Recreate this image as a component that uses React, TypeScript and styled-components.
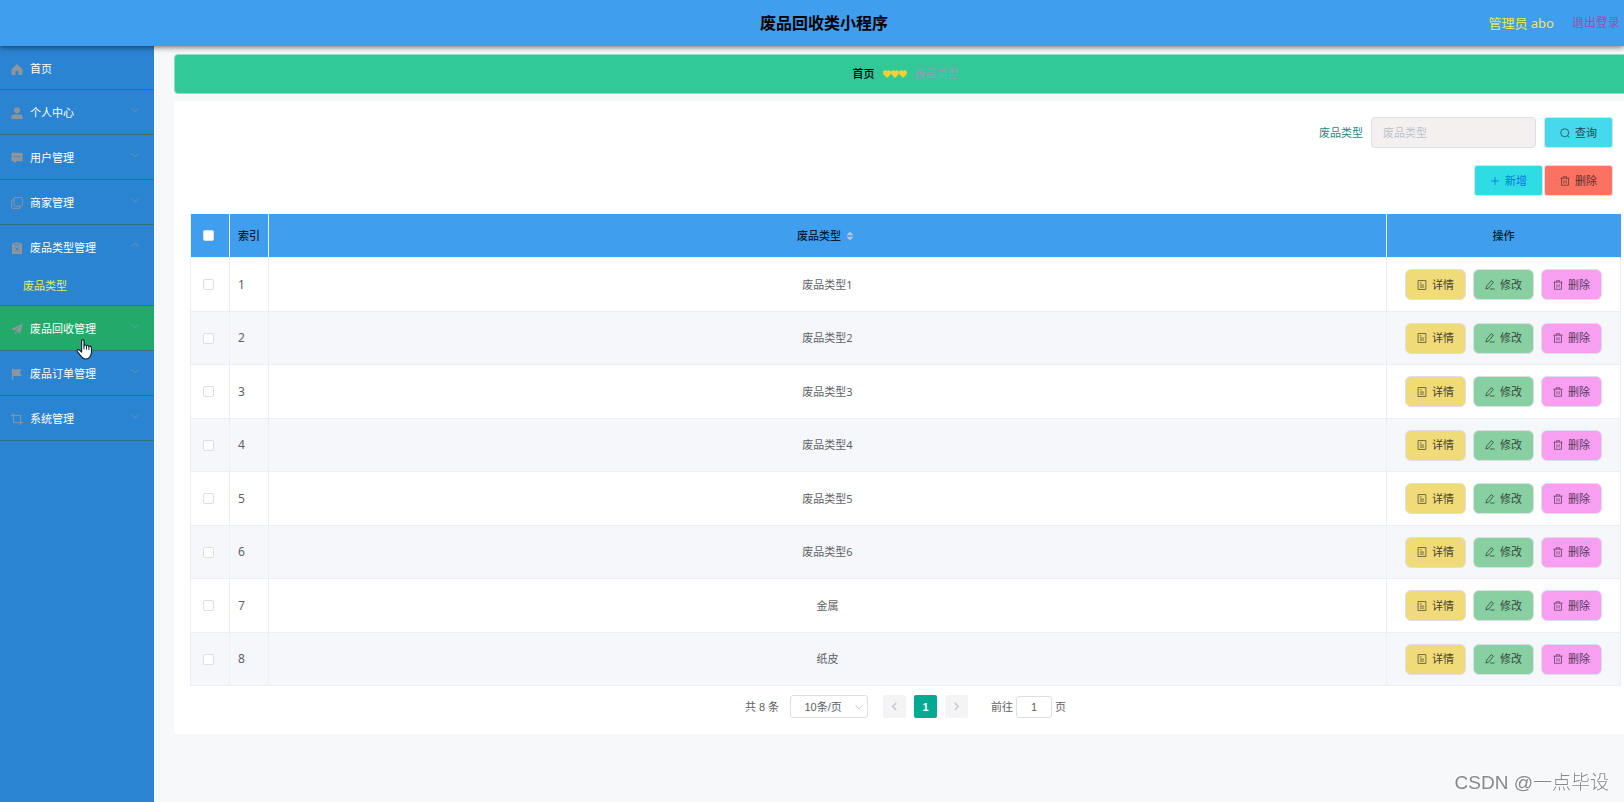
import React from 'react';
import styled, { createGlobalStyle, css } from 'styled-components';

const GlobalStyle = createGlobalStyle`
  *, *::before, *::after { box-sizing: border-box; }
  body {
    margin: 0;
    background: #f6f8fa;
    color: #606266;
    font-family: "Noto Sans", "Noto Sans CJK SC", sans-serif;
    font-size: 11px;
    line-height: 16px;
  }
  button, input, select { font: inherit; color: inherit; margin: 0; }
  button { cursor: pointer; }
  a { color: inherit; text-decoration: none; }
`;

const Page = styled.div`
  display: flex;
  flex-direction: column;
  min-height: 100vh;
  overflow: hidden;
`;

const Header = styled.header`
  position: relative;
  z-index: 2;
  display: grid;
  align-items: center;
  height: 46px;
  padding: 0 4px 0 28px;
  background: #409eef;
  box-shadow: 0 1px 6px rgba(0, 0, 0, 0.6);
`;

const Title = styled.h1`
  grid-area: 1 / 1;
  justify-self: center;
  margin: 0;
  color: #000;
  font-size: 16px;
  line-height: 24px;
  font-weight: 700;
`;

const UserZone = styled.div`
  grid-area: 1 / 1;
  justify-self: end;
  display: flex;
  gap: 18px;
  font-size: 13px;
  line-height: 20px;
`;

const UserName = styled.span`
  color: #e6ec4a;
`;

const Logout = styled.a`
  color: #a04cb4;
  font-size: 12px;
`;

const Body = styled.div`
  display: flex;
  flex: 1;
`;

const Sidebar = styled.nav`
  flex: 0 0 154px;
  background: #2a84d2;
`;

const Menu = styled.ul`
  list-style: none;
  margin: 0;
  padding: 0;
`;

const MenuItem = styled.li<{ $hovered?: boolean }>`
  position: relative;
  border-bottom: 1px solid #356f7c;
  ${(p) => p.$hovered && css`background: #23aa6b;`}
`;

const MenuLink = styled.a<{ $first?: boolean }>`
  display: flex;
  align-items: center;
  gap: 7px;
  height: ${(p) => (p.$first ? 43 : 44)}px;
  padding: 2px 15px 0 11px;
  color: #fff;
`;

const MenuIcon = styled.svg`
  flex: none;
  width: 12px;
  height: 12px;
  color: #8f959c;
`;

const Chevron = styled.svg`
  width: 8px;
  height: 8px;
  margin: 0 0 6px auto;
  color: #6f93b5;
`;

const SubLink = styled.a`
  display: block;
  height: 36px;
  padding: 9px 23px;
  color: #e6ec5a;
`;

const Pointer = styled.svg`
  position: absolute;
  z-index: 3;
  left: 76px;
  top: 33px;
  width: 18px;
  height: 21px;
  pointer-events: none;
`;

const Main = styled.main`
  flex: 1;
  min-width: 0;
  margin: 8px -13px 0 20px;
`;

const Breadcrumb = styled.nav`
  display: flex;
  align-items: center;
  justify-content: center;
  gap: 8px;
  height: 40px;
  border: 1px solid #8fe0c2;
  border-radius: 4px;
  background: #31c998;
`;

const Crumb = styled.a`
  color: #000;
  font-weight: 500;
`;

const CurrentCrumb = styled.span`
  color: #84a4bc;
`;

const Hearts = styled.svg`
  width: 24px;
  height: 8px;
  color: #f8cf30;
`;

const Card = styled.section`
  margin-top: 7px;
  padding: 16px;
  background: #fff;
`;

const SearchForm = styled.form`
  display: flex;
  align-items: center;
  justify-content: flex-end;
  gap: 8px;
  padding-right: 8px;
  label { color: #2b8585; }
`;

const SearchInput = styled.input`
  width: 165px;
  height: 31px;
  padding: 0 11px;
  border: 1px solid #dcdfe6;
  border-radius: 4px;
  background: #f5f0f0;
  outline: none;
  &::placeholder { color: #bcc2cc; opacity: 1; }
`;

const Actions = styled.div`
  display: flex;
  justify-content: flex-end;
  gap: 1px;
  padding: 17px 8px 18px 0;
`;

const tones = {
  search: { bg: '#46d9ee', fg: '#26474c' },
  add: { bg: '#2edce3', fg: '#1470e6' },
  remove: { bg: '#fb7261', fg: '#5a3333' },
  detail: { bg: '#f1db79', fg: '#46432f' },
  edit: { bg: '#88d0a2', fg: '#33493a' },
  erase: { bg: '#f89ff2', fg: '#55395a' },
};

const ActionButton = styled.button<{ $tone: keyof typeof tones; $small?: boolean }>`
  display: inline-flex;
  align-items: center;
  justify-content: center;
  gap: 5px;
  width: ${(p) => (p.$small ? 61 : 69)}px;
  height: 31px;
  padding: 0;
  border: 1px solid #dcdfe6;
  border-radius: ${(p) => (p.$small ? 6 : 3)}px;
  background: ${(p) => tones[p.$tone].bg};
  color: ${(p) => tones[p.$tone].fg};
  svg { width: 10px; height: 10px; }
`;

const Table = styled.table`
  width: 100%;
  table-layout: fixed;
  border-collapse: separate;
  border-spacing: 0;
  border-left: 1px solid #ebeef5;

  th, td {
    padding: 0 8px;
    border-right: 1px solid #ebeef5;
    border-bottom: 1px solid #ebeef5;
    text-align: center;
    vertical-align: middle;
  }
  th {
    height: 44px;
    background: #409eef;
    color: #0c1d30;
    font-weight: 500;
  }
  th:last-child { border-right-color: #409eef; }
  td { height: 54px; }
  tbody tr:nth-child(even) td { height: 53px; background: #f5f7fa; }
  tr > :nth-child(2) { text-align: left; }
`;

const IndexCell = styled.td`
  font-size: 12px;
`;

const Check = styled.input`
  appearance: none;
  display: block;
  width: 11px;
  height: 11px;
  margin: 0 0 0 4px;
  border: 1px solid #dcdfe6;
  border-radius: 2px;
  background: #fff;
`;

const SortLabel = styled.span`
  display: inline-flex;
  align-items: center;
  gap: 5px;
  margin-right: 4px;
  svg { width: 8px; height: 10px; color: #b9c6d6; }
`;

const RowActions = styled.div`
  display: flex;
  justify-content: center;
  gap: 7px;
`;

const Pagination = styled.div`
  display: flex;
  align-items: center;
  justify-content: center;
  padding-top: 9px;
  gap: 8px;
  font-family: "Liberation Sans", "Noto Sans CJK SC", sans-serif;
`;

const SizePicker = styled.div`
  position: relative;
  margin: 0 7px 0 3px;
  svg {
    position: absolute;
    right: 5px;
    top: 8px;
    width: 8px;
    height: 8px;
    color: #c0c4cc;
    pointer-events: none;
  }
`;

const SizeSelect = styled.select`
  appearance: none;
  display: block;
  width: 78px;
  height: 23px;
  padding: 0 20px 0 8px;
  border: 1px solid #dcdfe6;
  border-radius: 3px;
  background: #fff;
  text-align: center;
  text-align-last: center;
`;

const PageButton = styled.button<{ $active?: boolean }>`
  display: flex;
  align-items: center;
  justify-content: center;
  width: 23px;
  height: 23px;
  padding: 0;
  border: 0;
  border-radius: 2px;
  background: ${(p) => (p.$active ? '#00ab92' : '#f4f4f5')};
  color: ${(p) => (p.$active ? '#fff' : '#c0c4cc')};
  font-weight: 700;
  svg { width: 9px; height: 9px; }
`;

const Jumper = styled.label`
  display: flex;
  align-items: center;
  gap: 3px;
  margin-left: 15px;
`;

const JumpInput = styled.input`
  width: 36px;
  height: 22px;
  padding: 0;
  border: 1px solid #dcdfe6;
  border-radius: 3px;
  background: #fff;
  text-align: center;
`;

const Watermark = styled.div`
  position: fixed;
  right: 15px;
  bottom: 5px;
  color: #85888c;
  font-family: "Liberation Sans", "Noto Sans CJK SC", sans-serif;
  font-size: 19px;
  line-height: 28px;
  font-weight: 300;
  text-shadow: -1px -1px 0 #fff;
`;

const line = { fill: 'none', stroke: 'currentColor', strokeWidth: 1 } as const;

const menuGlyphs: Record<string, React.ReactNode> = {
  home: <path d="M6 1 0.6 6v6h4V8h2.8v4h4V6z" fill="currentColor" />,
  user: (
    <g fill="currentColor">
      <circle cx="6" cy="3.2" r="3" />
      <path d="M0.5 12V9.6A2.4 2.4 0 0 1 2.9 7.4h6.2a2.4 2.4 0 0 1 2.4 2.2V12z" />
    </g>
  ),
  comment: (
    <>
      <path d="M0.5 0.8h11v8.4H5.2L3.6 11.4 2.6 9.2H0.5z" fill="currentColor" />
      <path d="M3 4.6h1.2M5.4 4.6h1.2M7.8 4.6H9" stroke="#2a84d2" strokeWidth="1.2" />
    </>
  ),
  copy: (
    <g {...line}>
      <rect x="3" y="0.6" width="8.4" height="8.6" rx="1" />
      <path d="M3 3H1.6a1 1 0 0 0-1 1v6.4a1 1 0 0 0 1 1H8a1 1 0 0 0 1-1V9.2" />
    </g>
  ),
  release: (
    <>
      <path d="M1 1.4h2.4V0.4h5.2v1H11V12H1z" fill="currentColor" />
      <path d="M3.8 2.9h4.4M4.2 5.2l3.6 4M7.8 5.2l-3.6 4" stroke="#2a84d2" strokeWidth="0.9" fill="none" />
    </>
  ),
  send: (
    <g fill="currentColor">
      <path d="M11.8 0.4 0.2 6l3 1.4L9 3.2 4.4 8l4.8 2.6z" />
      <path d="M4.2 8.8v3L6 10z" />
    </g>
  ),
  flag: <path d="M0.8 0.4h1.4v0.8H11L8.6 4.6 11 8H2.2v4H0.8z" fill="currentColor" />,
  crop: <path d="M2.4 0v9.6H12M0 2.4h9.6V12" {...line} />,
};

const ChevronIcon = ({ up }: { up?: boolean }) => (
  <Chevron viewBox="0 0 8 8" aria-hidden="true">
    <path d={up ? 'M0.6 5.6 4 2.2l3.4 3.4' : 'M0.6 2.4 4 5.8l3.4-3.4'} {...line} />
  </Chevron>
);

const SearchIcon = () => (
  <svg viewBox="0 0 11 11" aria-hidden="true">
    <circle cx="5.2" cy="5.2" r="4.4" {...line} strokeWidth={0.9} />
    <path d="M8.4 8.6 10.2 10.4" {...line} strokeWidth={0.9} />
  </svg>
);

const PlusIcon = () => (
  <svg viewBox="0 0 11 11" aria-hidden="true">
    <path d="M5.5 1v9M1 5.5h9" {...line} strokeWidth={0.9} />
  </svg>
);

const TrashIcon = () => (
  <svg viewBox="0 0 11 11" aria-hidden="true">
    <path d="M0.5 2.4h10M3.6 2.4V0.8h3.8v1.6M1.7 2.4v7.8h7.6V2.4M4.3 4.6v3.6M6.7 4.6v3.6" {...line} strokeWidth={0.8} />
  </svg>
);

const TicketIcon = () => (
  <svg viewBox="0 0 11 11" aria-hidden="true">
    <path d="M1.2 0.6h8.6v9.8H1.2zM3.2 3.2h1.8M3.2 5.6h4.6M3.2 7.8h4.6" {...line} strokeWidth={0.8} />
  </svg>
);

const EditIcon = () => (
  <svg viewBox="0 0 11 11" aria-hidden="true">
    <path d="M6.8 0.8 9.2 2.4 4.4 8.6 1 10 1.8 6.8zM5.4 9.9h5.2" {...line} strokeWidth={0.9} />
  </svg>
);

const menu = [
  { label: '首页', icon: 'home', leaf: true },
  { label: '个人中心', icon: 'user' },
  { label: '用户管理', icon: 'comment' },
  { label: '商家管理', icon: 'copy' },
  { label: '废品类型管理', icon: 'release', children: ['废品类型'] },
  { label: '废品回收管理', icon: 'send', hovered: true },
  { label: '废品订单管理', icon: 'flag' },
  { label: '系统管理', icon: 'crop' },
];

const rows = ['废品类型1', '废品类型2', '废品类型3', '废品类型4', '废品类型5', '废品类型6', '金属', '纸皮'];

export default function App() {
  return (
    <Page>
      <GlobalStyle />
      <Header>
        <Title>废品回收类小程序</Title>
        <UserZone>
          <UserName>管理员 abo</UserName>
          <Logout href="#logout">退出登录</Logout>
        </UserZone>
      </Header>
      <Body>
        <Sidebar>
          <Menu>
            {menu.map((item) => (
              <MenuItem key={item.label} $hovered={item.hovered}>
                <MenuLink href="#" $first={item.leaf}>
                  <MenuIcon viewBox="0 0 12 12" aria-hidden="true">{menuGlyphs[item.icon]}</MenuIcon>
                  {item.label}
                  {!item.leaf && <ChevronIcon up={!!item.children} />}
                </MenuLink>
                {item.children?.map((child) => (
                  <SubLink key={child} href="#">{child}</SubLink>
                ))}
                {item.hovered && (
                  <Pointer viewBox="0 0 18 21" aria-hidden="true">
                    <path
                      d="M5.6 1.8c0-1.6 2.4-1.6 2.4 0v5c.3-1.2 2.4-1 2.5.3.5-1 2.3-.8 2.4.6.7-.9 2.6-.5 2.6 1.2v4.6c0 2-1.2 3.2-1.6 4.2-.8 1.6-2 2.3-4.2 2.3-2.6 0-3.6-1-4.6-2.6L1.4 12.6c-.9-1.6.8-2.7 2-1.6l2.2 2z"
                      fill="#fff"
                      stroke="#10253a"
                      strokeWidth="1.2"
                      strokeLinejoin="round"
                    />
                    <path d="M8 6.8v3.6M10.5 7.2v3.4M12.9 8v3" stroke="#10253a" strokeWidth="1" />
                  </Pointer>
                )}
              </MenuItem>
            ))}
          </Menu>
        </Sidebar>
        <Main>
          <Breadcrumb aria-label="面包屑">
            <Crumb href="#">首页</Crumb>
            <Hearts viewBox="0 0 24 8" aria-hidden="true">
              {[0, 8, 16].map((x) => (
                <path
                  key={x}
                  transform={`translate(${x} 0)`}
                  d="M4 8 0.6 4.6C-.8 2.6.4.3 2.1.3 3.1.3 3.7.8 4 1.5 4.3.8 4.900.3 5.900.3c1.700 0 2.900 2.300 1.500 4.300z"
                  fill="currentColor"
                />
              ))}
            </Hearts>
            <CurrentCrumb>废品类型</CurrentCrumb>
          </Breadcrumb>
          <Card>
            <SearchForm>
              <label htmlFor="type-filter">废品类型</label>
              <SearchInput id="type-filter" type="text" placeholder="废品类型" />
              <ActionButton type="button" $tone="search"><SearchIcon />查询</ActionButton>
            </SearchForm>
            <Actions>
              <ActionButton type="button" $tone="add"><PlusIcon />新增</ActionButton>
              <ActionButton type="button" $tone="remove"><TrashIcon />删除</ActionButton>
            </Actions>
            <Table>
              <colgroup>
                <col width="39" />
                <col width="39" />
                <col />
                <col width="234" />
              </colgroup>
              <thead>
                <tr>
                  <th><Check type="checkbox" aria-label="全选" /></th>
                  <th>索引</th>
                  <th>
                    <SortLabel>
                      废品类型
                      <svg viewBox="0 0 8 10" aria-hidden="true">
                        <path d="M4 0.600 7.500 4.200H0.500zM4 9.400 0.500 5.800h7z" fill="currentColor" />
                      </svg>
                    </SortLabel>
                  </th>
                  <th>操作</th>
                </tr>
              </thead>
              <tbody>
                {rows.map((name, i) => (
                  <tr key={name}>
                    <td><Check type="checkbox" aria-label={name} /></td>
                    <IndexCell>{i + 1}</IndexCell>
                    <td>{name}</td>
                    <td>
                      <RowActions>
                        <ActionButton type="button" $small $tone="detail"><TicketIcon />详情</ActionButton>
                        <ActionButton type="button" $small $tone="edit"><EditIcon />修改</ActionButton>
                        <ActionButton type="button" $small $tone="erase"><TrashIcon />删除</ActionButton>
                      </RowActions>
                    </td>
                  </tr>
                ))}
              </tbody>
            </Table>
            <Pagination>
              <span>共 8 条</span>
              <SizePicker>
                <SizeSelect aria-label="每页条数" defaultValue="10">
                  <option value="10">10条/页</option>
                  <option value="20">20条/页</option>
                </SizeSelect>
                <svg viewBox="0 0 8 8" aria-hidden="true"><path d="M0.6 2.4 4 5.8l3.4-3.4" {...line} /></svg>
              </SizePicker>
              <PageButton type="button" aria-label="上一页">
                <svg viewBox="0 0 9 9" aria-hidden="true"><path d="M6.2 1 2.7 4.5 6.2 8" {...line} strokeWidth={1.3} /></svg>
              </PageButton>
              <PageButton type="button" $active>1</PageButton>
              <PageButton type="button" aria-label="下一页">
                <svg viewBox="0 0 9 9" aria-hidden="true"><path d="M2.8 1 6.3 4.5 2.8 8" {...line} strokeWidth={1.3} /></svg>
              </PageButton>
              <Jumper>
                前往
                <JumpInput type="text" defaultValue="1" />
                页
              </Jumper>
            </Pagination>
          </Card>
        </Main>
      </Body>
      <Watermark>CSDN @一点毕设</Watermark>
    </Page>
  );
}
